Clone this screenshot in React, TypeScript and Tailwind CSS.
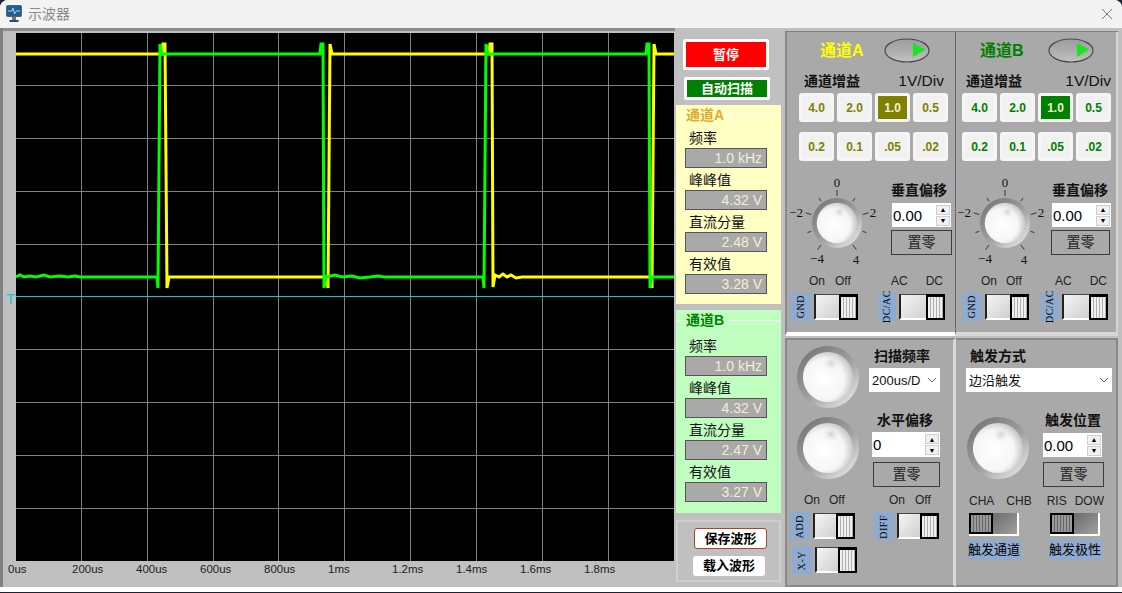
import { ReactNode } from "react";

const GAINS = ["4.0", "2.0", "1.0", "0.5", "0.2", "0.1", ".05", ".02"];
const X_LABELS = ["0us", "200us", "400us", "600us", "800us", "1ms", "1.2ms", "1.4ms", "1.6ms", "1.8ms"];
const V_LINES = [81, 147, 213, 278, 344, 410, 476, 542, 608];
const H_LINES = [85, 138, 191, 244, 349, 402, 455, 508];

const YELLOW_PATH =
  "M16 54 H162 L163 44 L165 44 L167 288 L169 277 H326 L328 288 L330 44 L332 54 H489 L490 44 L492 44 L493 287 L495 275 L499 277 L503 274 L507 277 L511 275 L516 278 L522 277 H651 L652 288 L654 44 L656 54 H674";
const GREEN_PATH =
  "M16 277 L20 275 L24 277 L30 276 L36 277 L44 275 L50 277 L60 276 L68 277 L75 276 L80 277 H157 L158 288 L160 44 L162 54 H320 L321 44 L323 44 L324 288 L326 277 L335 275 L342 277 L352 276 L360 278 L370 277 L378 276 L384 277 H483 L484 288 L486 44 L488 54 H646 L647 44 L649 44 L650 288 L652 277 H674";

function ScopePlot() {
  return (
    <svg width={658} height={528} viewBox="16 33 658 528" className="block bg-black">
      {V_LINES.map((x) => (
        <line key={x} x1={x + 0.5} x2={x + 0.5} y1={33} y2={561} stroke="#808080" />
      ))}
      {H_LINES.map((y) => (
        <line key={y} x1={16} x2={674} y1={y + 0.5} y2={y + 0.5} stroke="#808080" />
      ))}
      <line x1={16} x2={674} y1={296.5} y2={296.5} stroke="#12c8d8" />
      <path d={YELLOW_PATH} fill="none" stroke="#ffff00" strokeWidth={3} />
      <path d={GREEN_PATH} fill="none" stroke="#00ff00" strokeWidth={3} />
    </svg>
  );
}

function Knob({ size, ticks }: { size: number; ticks?: boolean }) {
  const w = ticks ? 94 : size;
  const h = ticks ? 92 : size;
  const cx = ticks ? 47 : size / 2;
  const cy = ticks ? 47 : size / 2;
  const ring = size / 2;
  const face = ring * 0.81;
  return (
    <svg width={w} height={h} className="block shrink-0">
      <defs>
        <linearGradient id="knobRing" x1="0.15" y1="0.1" x2="0.85" y2="0.9">
          <stop offset="0" stopColor="#7a7a7a" />
          <stop offset="0.55" stopColor="#a0a0a0" />
          <stop offset="1" stopColor="#dedede" />
        </linearGradient>
        <radialGradient id="knobFace" cx="0.42" cy="0.55" r="0.62">
          <stop offset="0" stopColor="#ffffff" />
          <stop offset="0.65" stopColor="#f6f6f6" />
          <stop offset="1" stopColor="#bcbcbc" />
        </radialGradient>
        <radialGradient id="knobSpot" cx="0.5" cy="0.5" r="0.5">
          <stop offset="0" stopColor="#d2d2d2" />
          <stop offset="1" stopColor="#f0f0f0" stopOpacity="0" />
        </radialGradient>
      </defs>
      {ticks &&
        [-144, -108, -72, -36, 0, 36, 72, 108, 144].map((deg) => {
          const a = (deg * Math.PI) / 180;
          const isMajor = deg % 72 === 0 || Math.abs(deg) === 144;
          const r2 = isMajor ? 33 : 31;
          return (
            <line
              key={deg}
              x1={cx + 27 * Math.sin(a)}
              y1={cy - 27 * Math.cos(a)}
              x2={cx + r2 * Math.sin(a)}
              y2={cy - r2 * Math.cos(a)}
              stroke="#333"
            />
          );
        })}
      <circle cx={cx} cy={cy} r={ring} fill="url(#knobRing)" />
      <circle cx={cx} cy={cy} r={face} fill="url(#knobFace)" />
      <ellipse cx={cx + face * 0.12} cy={cy - face * 0.55} rx={face * 0.36} ry={face * 0.32} fill="url(#knobSpot)" />
      {ticks && (
        <g fontFamily="'Liberation Serif', serif" fontSize={13} fill="#111" textAnchor="middle">
          <text x={47} y={11}>0</text>
          <text x={83} y={41}>2</text>
          <text x={6} y={41}>−2</text>
          <text x={27} y={87}>−4</text>
          <text x={66} y={88}>4</text>
        </g>
      )}
    </svg>
  );
}

function Led() {
  return (
    <svg width={46} height={25} className="block shrink-0">
      <defs>
        <linearGradient id="ledFill" x1="0" y1="0" x2="0" y2="1">
          <stop offset="0" stopColor="#9c9c9c" />
          <stop offset="0.6" stopColor="#b0b0b0" />
          <stop offset="1" stopColor="#c4c4c4" />
        </linearGradient>
      </defs>
      <ellipse cx={23} cy={12.5} rx={22} ry={11.5} fill="url(#ledFill)" stroke="#4a4a4a" strokeWidth={1.2} />
      <polygon points="29,5 41,11.5 29,19" fill="#14e81e" />
    </svg>
  );
}

function GainGrid({ active, text, activeBg }: { active: string; text: string; activeBg: string }) {
  return (
    <div className="grid grid-cols-[35px_35px_35px_35px] gap-x-[3px] gap-y-[10px]">
      {GAINS.map((g) => (
        <div
          key={g}
          className={`h-[29px] rounded-[3px] border-[3px] border-[#f5f5f5] flex items-center justify-center text-[12px] font-bold ${
            g === active ? `${activeBg} text-[#f0f0d8]` : `bg-[#f1f1f1] ${text}`
          }`}
        >
          {g}
        </div>
      ))}
    </div>
  );
}

function Spin({ value, className }: { value: string; className: string }) {
  return (
    <div className={`flex items-center bg-white pl-[1px] pr-[1px] text-[15px] text-black ${className}`}>
      <span className="flex-1 leading-none">{value}</span>
      <div className="flex flex-col gap-[1px] w-[14px]">
        <span className="h-[10px] bg-[#f0f0f0] border border-[#cfcfcf] flex items-center justify-center text-[7px] leading-none">▲</span>
        <span className="h-[10px] bg-[#f0f0f0] border border-[#cfcfcf] flex items-center justify-center text-[7px] leading-none">▼</span>
      </div>
    </div>
  );
}

function ZeroButton({ className }: { className: string }) {
  return (
    <div className={`h-[25px] border border-[#3c3c3c] flex items-center justify-center text-[14px] text-[#222] ${className}`}>
      置零
    </div>
  );
}

function Select({ value, className }: { value: string; className: string }) {
  return (
    <div className={`h-[24px] bg-white flex items-center justify-between pl-[3px] pr-[2px] text-[13px] text-[#111] ${className}`}>
      <span>{value}</span>
      <svg width={10} height={6} viewBox="0 0 10 6" className="mr-[1px]">
        <path d="M1 1 L5 5 L9 1" fill="none" stroke="#666" />
      </svg>
    </div>
  );
}

function Toggle({ className }: { className: string }) {
  return (
    <div className={`flex h-[26px] ${className}`}>
      <div className="flex-1 border-l-2 border-b-2 border-t border-l-[#222] border-b-[#fff] border-t-[#444] bg-linear-to-br from-[#f5f5f5] to-[#cfcfcf]" />
      <div className="w-[19px] border-2 border-black border-t-[3px] bg-[repeating-linear-gradient(90deg,#f0f0f0_0px,#f0f0f0_2px,#b0b0b0_2px,#b0b0b0_3px)]" />
    </div>
  );
}

function DarkToggle() {
  return (
    <div className="flex w-[50px] h-[23px] border-r-2 border-b-2 border-white">
      <div className="w-[24px] border-2 border-black bg-[repeating-linear-gradient(90deg,#9a9a9a_0px,#9a9a9a_2px,#666_2px,#666_3px)]" />
      <div className="flex-1 bg-linear-to-br from-[#6c6c6c] to-[#a0a0a0]" />
    </div>
  );
}

function VTag({ label, className }: { label: string; className: string }) {
  return (
    <div className={`h-[28px] bg-[#8fabcf] flex items-center justify-center shrink-0 ${className}`}>
      <span className="[writing-mode:vertical-rl] rotate-180 whitespace-nowrap font-['Liberation_Serif',serif] text-[10px] tracking-[0.5px] leading-none text-black">
        {label}
      </span>
    </div>
  );
}

function SwitchGroup({
  left,
  right,
  labelClass,
  tag,
  tagClass,
  toggleClass,
}: {
  left: string;
  right: string;
  labelClass: string;
  tag: string;
  tagClass: string;
  toggleClass: string;
}) {
  return (
    <div>
      <div className={`flex h-[17px] mb-[4px] items-center text-[12px] text-[#222] ${labelClass}`}>
        <span>{left}</span>
        <span>{right}</span>
      </div>
      <SwitchRow tag={tag} tagClass={tagClass} toggleClass={toggleClass} />
    </div>
  );
}

function SwitchRow({ tag, tagClass, toggleClass }: { tag: string; tagClass: string; toggleClass: string }) {
  return (
    <div className="flex items-center gap-[3px]">
      <VTag label={tag} className={tagClass} />
      <Toggle className={toggleClass} />
    </div>
  );
}

function Heading({ children, className }: { children: ReactNode; className?: string }) {
  return <div className={`h-[16px] flex items-center text-[14px] font-bold text-[#111] whitespace-nowrap ${className ?? ""}`}>{children}</div>;
}

function Readouts({
  title,
  titleColor,
  rows,
  className,
  firstGap,
}: {
  title: string;
  titleColor: string;
  rows: [string, string][];
  className: string;
  firstGap: string;
}) {
  return (
    <div className={`w-[105px] ml-[1px] ${className}`}>
      <div className="h-[20px] flex items-center">
        <div className="w-[8px] h-px bg-white/80 ml-[1px]" />
        <span className={`text-[14px] font-bold px-[1px] ${titleColor}`}>{title}</span>
        <div className="flex-1 h-px bg-white/80 mr-[1px] ml-[1px]" />
      </div>
      <div className={`flex flex-col gap-[4px] ${firstGap}`}>
        {rows.map(([label, value]) => (
          <div key={label}>
            <div className="h-[16px] ml-[13px] flex items-center text-[14px] text-[#111]">{label}</div>
            <div className="mt-[2px] ml-[9px] w-[82px] h-[20px] bg-[#a9a9a9] border border-[#555] flex items-center justify-end pr-[4px] text-[14px] text-[#f3efd2]">
              {value}
            </div>
          </div>
        ))}
      </div>
    </div>
  );
}

function ChannelPanel({
  title,
  titleColor,
  activeBg,
  gainText,
  titleClass,
  headClass,
  gridClass,
  knobClass,
  sideClass,
  spinClass,
  zeroClass,
  bottomClass,
  groupA,
  groupB,
  className,
}: {
  title: string;
  titleColor: string;
  activeBg: string;
  gainText: string;
  titleClass: string;
  headClass: string;
  gridClass: string;
  knobClass: string;
  sideClass: string;
  spinClass: string;
  zeroClass: string;
  bottomClass: string;
  groupA: ReactNode;
  groupB: ReactNode;
  className: string;
}) {
  return (
    <div className={`bg-[#a9a9a9] flex flex-col ${className}`}>
      <div className={`flex items-center h-[25px] mt-[6px] ${titleClass}`}>
        <span className={`text-[16px] font-bold ${titleColor}`}>{title}</span>
        <Led />
      </div>
      <div className={`flex justify-between items-center h-[16px] mt-[10px] text-[14px] text-[#111] ${headClass}`}>
        <span className="font-bold">通道增益</span>
        <span className="text-[15.5px]">1V/Div</span>
      </div>
      <div className={`mt-[4px] ${gridClass}`}>
        <GainGrid active="1.0" text={gainText} activeBg={activeBg} />
      </div>
      <div className={`flex mt-[15px] h-[92px] ${knobClass}`}>
        <Knob size={50} ticks />
        <div className={sideClass}>
          <Heading className="ml-[1px] mt-[6px]">垂直偏移</Heading>
          <Spin value="0.00" className={`mt-[5px] h-[24px] ${spinClass}`} />
          <ZeroButton className={`mt-[3px] ${zeroClass}`} />
        </div>
      </div>
      <div className={`flex mt-[4px] ${bottomClass}`}>
        {groupA}
        {groupB}
      </div>
    </div>
  );
}

function SaveLoad() {
  return (
    <div className="w-[105px] ml-[1px] mt-[7px] h-[62px] border-2 border-[#d0d0d0] pt-[6px]">
      <div className="ml-[16px] w-[73px] h-[21px] bg-white border border-[#a8452a] rounded-[3px] flex items-center justify-center text-[13px] font-bold text-black">
        保存波形
      </div>
      <div className="ml-[15px] mt-[7px] w-[72px] h-[20px] bg-white rounded-[3px] flex items-center justify-center text-[13px] font-bold text-black">
        载入波形
      </div>
    </div>
  );
}

function TitleBar() {
  return (
    <div className="h-[28px] bg-[#f3f3f3] rounded-t-[8px] flex items-center pl-[6px] pr-[9px] shrink-0">
      <svg width={16} height={18} viewBox="0 0 16 18" className="shrink-0">
        <rect x={0.5} y={0.5} width={15} height={11} rx={1} fill="#1d5f92" stroke="#55606a" />
        <path d="M2 6 H6 L7 3 L8.5 9 L10 6 H14" fill="none" stroke="#dbeaf4" strokeWidth={0.8} />
        <rect x={6} y={12} width={4} height={3} fill="#6a747c" />
        <rect x={3.5} y={15} width={9} height={2} fill="#3d464d" />
      </svg>
      <span className="ml-[6px] text-[14px] text-[#8a8a8a] flex-1">示波器</span>
      <svg width={12} height={12} viewBox="0 0 12 12">
        <path d="M1 1 L11 11 M11 1 L1 11" stroke="#777" />
      </svg>
    </div>
  );
}

export default function App() {
  return (
    <div className="w-[1122px] h-[593px] bg-[#1c2333] overflow-hidden font-['Liberation_Sans','Noto_Sans_CJK_SC',sans-serif]">
      <div className="h-[592px] flex flex-col bg-white rounded-t-[8px]">
        <TitleBar />
        <div className="h-[559px] flex bg-[#c0c0c0] border-l-[3px] border-[#808080]">
          {/* scope */}
          <div className="w-[672px] shrink-0 border-t-[3px] border-[#8c8c8c] relative">
            <div className="ml-[13px] mt-[2px]">
              <ScopePlot />
            </div>
            <span className="absolute left-[3px] top-[260px] text-[15px] leading-none text-[#12c8d8]">T</span>
            <div className="grid grid-cols-[repeat(10,64px)] ml-[5px] mt-[1px] text-[11.5px] text-[#222]">
              {X_LABELS.map((l) => (
                <span key={l} className="h-[14px] leading-[14px]">{l}</span>
              ))}
            </div>
          </div>

          {/* readouts */}
          <div className="w-[107px] shrink-0 pt-[11px]">
            <div className="ml-[8px] w-[86px] h-[31px] bg-[#ff0000] border-[3px] border-white rounded-[2px] flex items-center justify-center text-[13px] font-bold text-white">
              暂停
            </div>
            <div className="ml-[9px] mt-[7px] w-[86px] h-[23px] bg-[#008000] border-[3px] border-white rounded-[2px] flex items-center justify-center text-[13px] font-bold text-white">
              自动扫描
            </div>
            <Readouts
              title="通道A"
              titleColor="text-[#e2a92e]"
              className="mt-[5px] h-[199px] bg-[#ffffc4]"
              firstGap="mt-[5px]"
              rows={[
                ["频率", "1.0 kHz"],
                ["峰峰值", "4.32 V"],
                ["直流分量", "2.48 V"],
                ["有效值", "3.28 V"],
              ]}
            />
            <Readouts
              title="通道B"
              titleColor="text-[#008000]"
              className="mt-[6px] h-[203px] bg-[#c0ffc0]"
              firstGap="mt-[8px]"
              rows={[
                ["频率", "1.0 kHz"],
                ["峰峰值", "4.32 V"],
                ["直流分量", "2.47 V"],
                ["有效值", "3.27 V"],
              ]}
            />
            <SaveLoad />
          </div>

          {/* controls */}
          <div className="ml-[3px] w-[333px] shrink-0 flex flex-col">
            <div className="flex h-[307px] mt-[3px] border-t border-[#808080]">
              <ChannelPanel
                className="w-[171px] border-l-2 border-r border-b-[4px] border-l-[#8a8a8a] border-r-[#666] border-b-white"
                title="通道A"
                titleColor="text-[#ffff00] w-[64px]"
                activeBg="bg-[#808000]"
                gainText="text-[#808000]"
                titleClass="ml-[33px]"
                headClass="pl-[17px] pr-[11px]"
                gridClass="ml-[12px]"
                knobClass="ml-[3px]"
                sideClass="ml-[6px]"
                spinClass="w-[59px] ml-[2px]"
                zeroClass="w-[61px] ml-[1px]"
                bottomClass="ml-[4px]"
                groupA={
                  <SwitchGroup left="On" right="Off" labelClass="pl-[18px] gap-[10px]" tag="GND" tagClass="w-[20px]" toggleClass="w-[44px]" />
                }
                groupB={
                  <div className="ml-[20px]">
                    <SwitchGroup left="AC" right="DC" labelClass="pl-[13px] gap-[18px]" tag="DC/AC" tagClass="w-[18px]" toggleClass="w-[46px]" />
                  </div>
                }
              />
              <ChannelPanel
                className="flex-1 border-r-2 border-b-[4px] border-r-[#d8d8d8] border-b-[#d8d8d8]"
                title="通道B"
                titleColor="text-[#008000] w-[68px]"
                activeBg="bg-[#008000]"
                gainText="text-[#008000]"
                titleClass="ml-[24px]"
                headClass="pl-[10px] pr-[5px]"
                gridClass="ml-[6px]"
                knobClass="ml-[2px]"
                sideClass="ml-[-1px]"
                spinClass="w-[59px] ml-[1px]"
                zeroClass="w-[59px]"
                bottomClass="ml-[6px]"
                groupA={
                  <SwitchGroup left="On" right="Off" labelClass="pl-[19px] gap-[9px]" tag="GND" tagClass="w-[20px]" toggleClass="w-[44px]" />
                }
                groupB={
                  <div className="ml-[12px]">
                    <SwitchGroup left="AC" right="DC" labelClass="pl-[14px] gap-[18px]" tag="DC/AC" tagClass="w-[18px]" toggleClass="w-[46px]" />
                  </div>
                }
              />
            </div>

            <div className="flex h-[250px] mt-[2px]">
              {/* sweep */}
              <div className="w-[171px] bg-[#a9a9a9] border-2 border-[#8a8a8a] border-r-[3px] border-r-[#d8d8d8] pt-[6px] pl-[10px]">
                <div className="flex">
                  <div className="flex flex-col gap-[9px]">
                    <Knob size={62} />
                    <Knob size={62} />
                  </div>
                  <div className="ml-[10px] pt-[2px]">
                    <Heading className="ml-[5px]">扫描频率</Heading>
                    <Select value="200us/D" className="mt-[4px] w-[71px]" />
                    <Heading className="ml-[8px] mt-[20px]">水平偏移</Heading>
                    <Spin value="0" className="mt-[4px] h-[25px] ml-[3px] w-[68px]" />
                    <ZeroButton className="mt-[5px] ml-[4px] w-[67px]" />
                  </div>
                </div>
                <div className="flex mt-[4px] -ml-[7px]">
                  <SwitchGroup left="On" right="Off" labelClass="pl-[14px] gap-[9px]" tag="ADD" tagClass="w-[20px]" toggleClass="w-[42px]" />
                  <div className="ml-[19px]">
                    <SwitchGroup left="On" right="Off" labelClass="pl-[15px] gap-[10px]" tag="DIFF" tagClass="w-[20px]" toggleClass="w-[42px]" />
                  </div>
                </div>
                <div className="mt-[6px] -ml-[5px]">
                  <SwitchRow tag="X-Y" tagClass="w-[20px]" toggleClass="w-[42px]" />
                </div>
              </div>

              {/* trigger */}
              <div className="flex-1 bg-[#a9a9a9] border-2 border-l-0 border-[#8a8a8a] pt-[8px]">
                <Heading className="ml-[14px]">触发方式</Heading>
                <Select value="边沿触发" className="mt-[4px] ml-[10px] w-[146px]" />
                <div className="flex mt-[25px] ml-[11px]">
                  <Knob size={62} />
                  <div className="ml-[14px]">
                    <Heading className="ml-[2px] -mt-[5px]">触发位置</Heading>
                    <Spin value="0.00" className="mt-[5px] h-[24px] w-[59px]" />
                    <ZeroButton className="mt-[5px] w-[61px]" />
                  </div>
                </div>
                <div className="flex mt-[5px] ml-[13px] h-[17px] items-center text-[12px] text-[#222]">
                  <span>CHA</span>
                  <span className="ml-[12px]">CHB</span>
                  <span className="ml-[15px]">RIS</span>
                  <span className="ml-[8px]">DOW</span>
                </div>
                <div className="flex mt-[4px] ml-[13px] gap-[31px]">
                  <DarkToggle />
                  <DarkToggle />
                </div>
                <div className="flex mt-[4px] ml-[12px] gap-[28px]">
                  <div className="w-[53px] h-[20px] bg-[#8fabcf] text-[13px] leading-[20px] text-black whitespace-nowrap">触发通道</div>
                  <div className="w-[53px] h-[20px] bg-[#8fabcf] text-[13px] leading-[20px] text-black whitespace-nowrap">触发极性</div>
                </div>
              </div>
            </div>
          </div>
        </div>
      </div>
    </div>
  );
}
